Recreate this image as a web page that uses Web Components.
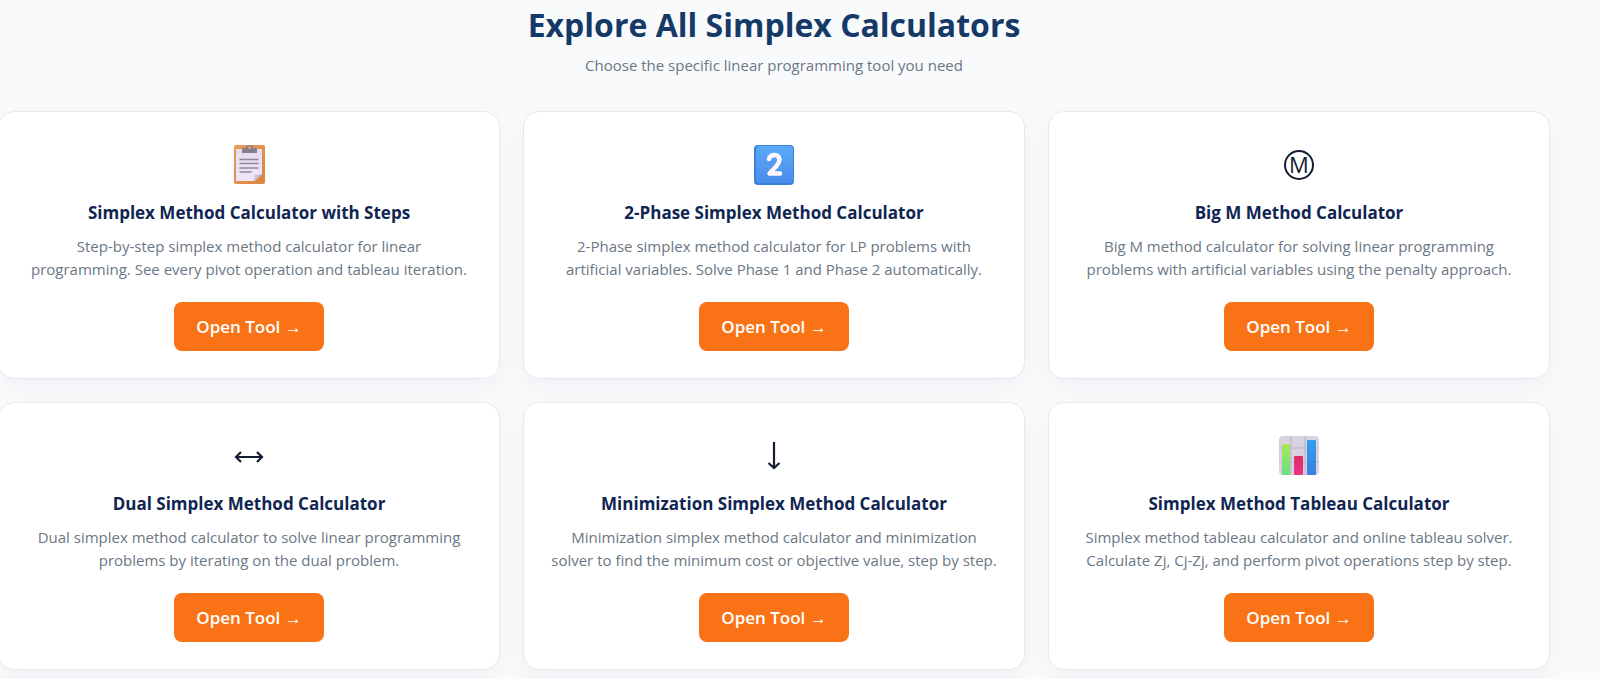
<!DOCTYPE html>
<html lang="en">
<head>
    <meta charset="UTF-8">
    <meta name="viewport" content="width=device-width, initial-scale=1.0">
    <title>Explore All Simplex Calculators</title>
    <style>
        body {
            margin: 0;
            background: #f9fafc;
            font-family: "Segoe UI", "Open Sans", "Noto Sans", sans-serif;
        }
    </style>
</head>
<body>
    <tool-section>
        <span slot="title">Explore All Simplex Calculators</span>
        <span slot="subtitle">Choose the specific linear programming tool you need</span>

        <tool-card href="#steps">
            <tool-icon slot="icon" name="clipboard"></tool-icon>
            <span slot="title">Simplex Method Calculator with Steps</span>
            Step-by-step simplex method calculator for linear<br>
            programming. See every pivot operation and tableau iteration.
        </tool-card>
        <tool-card href="#two-phase">
            <tool-icon slot="icon" name="two"></tool-icon>
            <span slot="title">2-Phase Simplex Method Calculator</span>
            2-Phase simplex method calculator for LP problems with artificial variables. Solve Phase 1 and Phase 2 automatically.
        </tool-card>
        <tool-card href="#big-m">
            <tool-icon slot="icon" name="big-m"></tool-icon>
            <span slot="title">Big M Method Calculator</span>
            Big M method calculator for solving linear programming problems with artificial variables using the penalty approach.
        </tool-card>
        <tool-card href="#dual">
            <tool-icon slot="icon" name="dual"></tool-icon>
            <span slot="title">Dual Simplex Method Calculator</span>
            Dual simplex method calculator to solve linear programming problems by iterating on the dual problem.
        </tool-card>
        <tool-card href="#minimization">
            <tool-icon slot="icon" name="down"></tool-icon>
            <span slot="title">Minimization Simplex Method Calculator</span>
            Minimization simplex method calculator and minimization<br>
            solver to find the minimum cost or objective value, step by step.
        </tool-card>
        <tool-card href="#tableau">
            <tool-icon slot="icon" name="chart"></tool-icon>
            <span slot="title">Simplex Method Tableau Calculator</span>
            Simplex method tableau calculator and online tableau solver. Calculate Zj, Cj-Zj, and perform pivot operations step by step.
        </tool-card>
    </tool-section>

    <script>
        const ICONS = {
            clipboard: `
                <svg viewBox="0 0 40 40" width="40" height="40" aria-hidden="true">
                    <defs>
                        <linearGradient id="board" x1="0" y1="0" x2="1" y2="1">
                            <stop offset="0" stop-color="#eb9a55"/>
                            <stop offset="1" stop-color="#d98646"/>
                        </linearGradient>
                        <linearGradient id="paper" x1="0" y1="0" x2="0" y2="1">
                            <stop offset="0" stop-color="#e4dcee"/>
                            <stop offset="1" stop-color="#efe6fb"/>
                        </linearGradient>
                    </defs>
                    <rect x="5" y="0" width="31" height="39" rx="2" fill="url(#board)"/>
                    <path d="M7 4h26v25l-8 7H7z" fill="url(#paper)"/>
                    <path d="M33 29l-9 7q2-3 2-6 4 0 7-1z" fill="#cdbfdc"/>
                    <path d="M13 8V4q0-1 1-1h3q0-3 3.500-3T24 3h3q1 0 1 1v4z" fill="#85808d"/>
                    <circle cx="20.500" cy="2.500" r="1.500" fill="#e3a36c"/>
                    <path d="M10.500 14.500h19M10.500 18.500h19M10.500 23h19M10.500 27h12" stroke="#8e8799" stroke-width="1.500"/>
                </svg>`,
            two: `
                <svg viewBox="0 0 40 40" width="40" height="40" aria-hidden="true">
                    <defs>
                        <linearGradient id="key" x1="0" y1="0" x2="0" y2="1">
                            <stop offset="0" stop-color="#5aaaf8"/>
                            <stop offset="1" stop-color="#4a8cec"/>
                        </linearGradient>
                    </defs>
                    <rect width="40" height="40" rx="4" fill="#3d80d8"/>
                    <rect x="2" y="1" width="37" height="37" rx="3" fill="url(#key)"/>
                    <path d="M15 14q1-4 5.500-4t5 4.500q0 3-3 6.500L15.500 28.500H26" fill="none" stroke="#fff8ff" stroke-width="4.500" stroke-linecap="round" stroke-linejoin="round"/>
                </svg>`,
            "big-m": `
                <svg viewBox="0 0 40 40" width="40" height="40">
                    <circle cx="20" cy="20" r="14" fill="none" stroke="#131c33" stroke-width="2"/>
                    <text x="20" y="28" text-anchor="middle" font-size="22" fill="#131c33">M</text>
                </svg>`,
            dual: `
                <svg viewBox="0 0 40 40" width="40" height="40" aria-hidden="true" fill="none" stroke="#131c33" stroke-width="2.200">
                    <path d="M7 21h26M12 16l-5 5 5 5M28 16l5 5-5 5"/>
                </svg>`,
            down: `
                <svg viewBox="0 0 40 40" width="40" height="40" aria-hidden="true" fill="none" stroke="#131c33" stroke-width="2.200">
                    <path d="M20 6v26M14.500 27L20 32l5.500-5"/>
                </svg>`,
            chart: `
                <svg viewBox="0 0 40 40" width="40" height="40" aria-hidden="true">
                    <defs>
                        <linearGradient id="green" x1="0" y1="0" x2="0" y2="1">
                            <stop offset="0" stop-color="#a9ea58"/>
                            <stop offset="1" stop-color="#6ade80"/>
                        </linearGradient>
                        <linearGradient id="red" x1="0" y1="0" x2="0" y2="1">
                            <stop offset="0" stop-color="#d72f68"/>
                            <stop offset="1" stop-color="#ee3282"/>
                        </linearGradient>
                        <linearGradient id="blue" x1="0" y1="0" x2="0" y2="1">
                            <stop offset="0" stop-color="#2f9ff2"/>
                            <stop offset="1" stop-color="#3a7fdd"/>
                        </linearGradient>
                    </defs>
                    <rect width="40" height="39" rx="4" fill="#d9d2e2"/>
                    <path d="M12 0v39M26 0v39M0 12h40M0 26h40" stroke="#b9b1c4"/>
                    <rect x="3" y="8" width="8" height="31" rx="1" fill="url(#green)"/>
                    <rect x="15" y="20" width="9" height="19" rx="1" fill="url(#red)"/>
                    <rect x="28" y="4" width="9" height="35" rx="1" fill="url(#blue)"/>
                </svg>`
        };

        class ToolIcon extends HTMLElement {
            connectedCallback() {
                this.attachShadow({ mode: 'open' });
                this.shadowRoot.innerHTML = `
                    <style>
                        :host {
                            display: flex;
                            align-items: center;
                            justify-content: center;
                            height: 48px;
                        }

                        svg {
                            display: block;
                        }
                    </style>
                    ${ICONS[this.getAttribute('name')]}
                `;
            }
        }

        class ToolCard extends HTMLElement {
            connectedCallback() {
                this.attachShadow({ mode: 'open' });
                this.shadowRoot.innerHTML = `
                    <style>
                        :host {
                            display: flex;
                            flex-direction: column;
                            align-items: center;
                            box-sizing: border-box;
                            padding: 29px 24px 27px;
                            background: #fff;
                            border: 1px solid #e5e9ee;
                            border-radius: 16px;
                            box-shadow: 0 8px 24px rgba(15, 23, 42, 0.04);
                            text-align: center;
                        }

                        h3 {
                            margin: 12px 0 10px;
                            color: #0f2552;
                            font-size: 17px;
                            font-weight: 700;
                            line-height: 24px;
                        }

                        p {
                            margin: 0 0 21px;
                            color: #6b7785;
                            font-size: 15px;
                            line-height: 23px;
                        }

                        .button {
                            margin-top: auto;
                            padding: 13px 22px 12px;
                            background: #f97316;
                            border-radius: 8px;
                            color: #fff;
                            font-size: 17px;
                            font-weight: 600;
                            line-height: 24px;
                            text-decoration: none;
                        }

                        .button:hover {
                            background: #ea580c;
                        }
                    </style>
                    <slot name="icon"></slot>
                    <h3><slot name="title"></slot></h3>
                    <p><slot></slot></p>
                    <a class="button" href="${this.getAttribute('href')}">Open Tool →</a>
                `;
            }
        }

        class ToolSection extends HTMLElement {
            connectedCallback() {
                this.attachShadow({ mode: 'open' });
                this.shadowRoot.innerHTML = `
                    <style>
                        :host {
                            display: block;
                            margin: 0 50px 0 -2px;
                            padding: 5px 0 10px;
                        }

                        header {
                            margin-bottom: 34px;
                            text-align: center;
                        }

                        h2 {
                            margin: 0 0 8px;
                            color: #153a68;
                            font-size: 32px;
                            font-weight: 700;
                            line-height: 40px;
                        }

                        p {
                            margin: 0;
                            color: #6b7785;
                            font-size: 15px;
                            line-height: 24px;
                        }

                        .grid {
                            display: grid;
                            grid-template-columns: repeat(3, 1fr);
                            gap: 23px;
                        }

                        @media (max-width: 1000px) {
                            .grid {
                                grid-template-columns: 1fr;
                            }
                        }
                    </style>
                    <header>
                        <h2><slot name="title"></slot></h2>
                        <p><slot name="subtitle"></slot></p>
                    </header>
                    <div class="grid">
                        <slot></slot>
                    </div>
                `;
            }
        }

        customElements.define('tool-icon', ToolIcon);
        customElements.define('tool-card', ToolCard);
        customElements.define('tool-section', ToolSection);
    </script>
</body>
</html>
